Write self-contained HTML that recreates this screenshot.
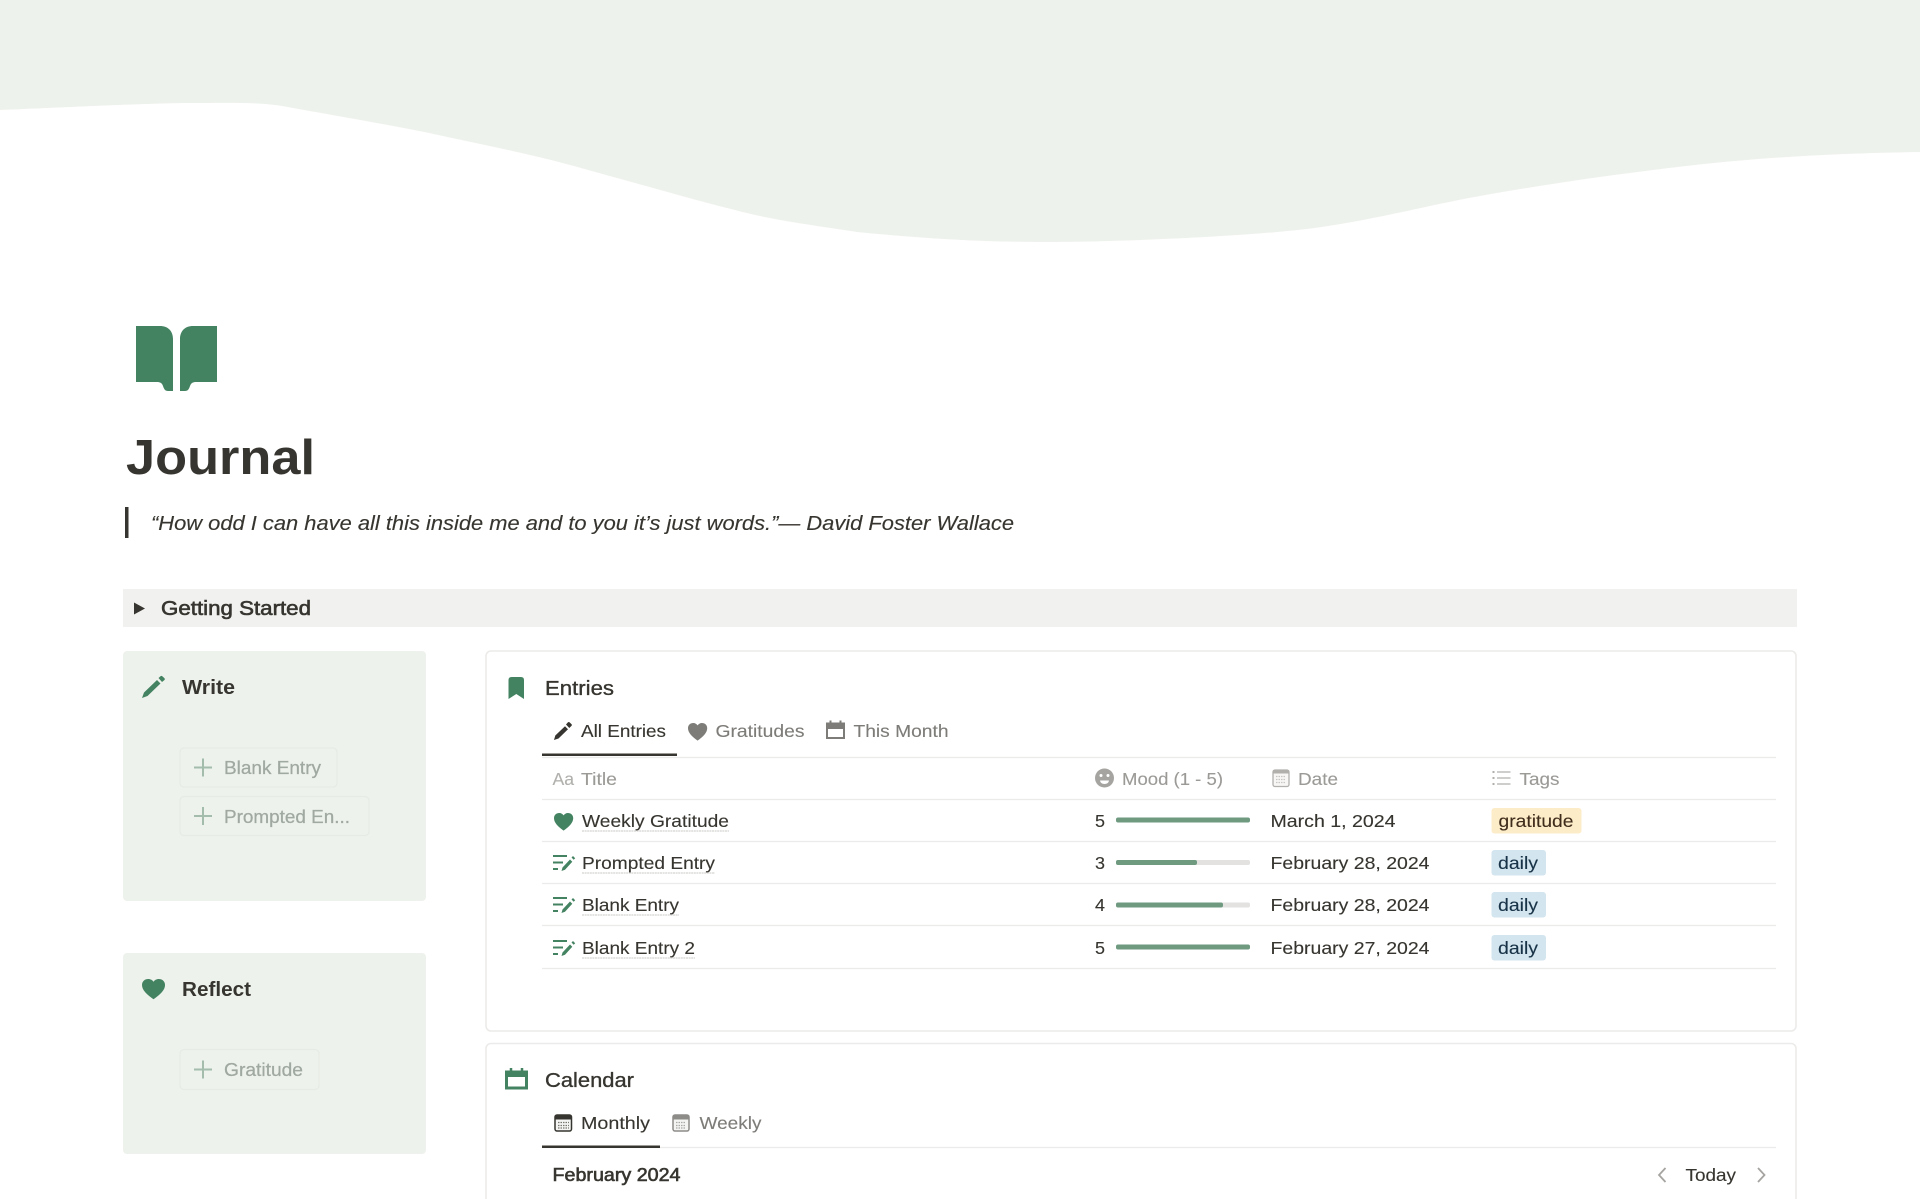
<!DOCTYPE html>
<html lang="en"><head><meta charset="utf-8"><title>Journal</title>
<style>
html,body{margin:0;padding:0;background:#fff;width:1920px;height:1199px;overflow:hidden}
svg{display:block;position:absolute;left:0;top:0}
text{font-family:"Liberation Sans",sans-serif;fill:#37352f;stroke:#37352f;stroke-width:.12px;font-size:17.5px;white-space:pre}
.b{font-weight:700;stroke-width:0}
.s{stroke-width:.6px}
.m{stroke-width:.35px}
.g{fill:#7d7c78;stroke:#7d7c78}
.h{fill:#9b9a97;stroke:#9b9a97}
.btn{fill:#a0a8a2;stroke:#a0a8a2;stroke-width:.25px}
.card{fill:#fff;stroke:#ecebe9;stroke-width:1.6}
.ln{stroke:#ebebe9;stroke-width:1.3}
.u{stroke:#d4d3d0;stroke-width:1.2;stroke-dasharray:2 .6}
.tr{fill:#e3e2e0}.fl{fill:#6f9a80}
</style></head><body>
<svg width="1920" height="1199" viewBox="0 0 1920 1199" xmlns="http://www.w3.org/2000/svg">
<!-- cover -->
<path fill="#eef2ec" d="M0 110C31 109 137 103.700 184 103C215 103.200 258 101.500 282 106C320 113 385 124 429 133C470 142 510 150 551 160C612 176 690 199 735 210C775 221 820 226 857 232C918 238 980 242 1041 242C1127 242 1241 236 1298 230C1355 224 1417 208 1469 198C1550 183 1646 170 1714 163C1783 156 1851 153 1920 152V0H0Z"/>
<!-- book -->
<path fill="#448361" d="M136 326H160C168 326 173 331 173 339V391H168C165 391 164 389 163 386C162 383 160 382 157 382H136Z"/>
<path fill="#448361" d="M217 326H193C185 326 180 331 180 339V391H185C188 391 189 389 190 386C191 383 193 382 196 382H217Z"/>
<!-- title -->
<text x="126" y="474" class="b" style="font-size:49px" textLength="189" lengthAdjust="spacingAndGlyphs">Journal</text>
<rect x="125" y="507" width="3.500" height="31" fill="#37352f"/>
<text x="151" y="530" font-style="italic" style="font-size:20px" textLength="863" lengthAdjust="spacingAndGlyphs">“How odd I can have all this inside me and to you it’s just words.”— David Foster Wallace</text>
<!-- getting started -->
<rect x="123" y="589" width="1674" height="38" fill="#f1f1ef"/>
<path d="M134 602.500L145 608.500L134 614.500Z" fill="#37352f"/>
<text x="161" y="615" class="s" style="font-size:20px" textLength="150" lengthAdjust="spacingAndGlyphs">Getting Started</text>
<!-- write card -->
<rect x="123" y="651" width="303" height="250" rx="4" fill="#eef2ec"/>
<path fill="#448361" d="M142 698L144 692.500L157 680L160.500 683.500L147.500 696ZM158.500 678L160.500 676.200Q161.500 675.500 162.300 676.200L164.500 678.300Q165.300 679.200 164.500 680L162 682Z"/>
<text x="182" y="694" class="b" style="font-size:20px" textLength="53" lengthAdjust="spacingAndGlyphs">Write</text>
<rect x="180" y="748" width="157" height="39" rx="4" fill="none" stroke="#e7ebe5" stroke-width="1.300"/>
<path d="M194 767.500H212M203 758.500V776.500" stroke="#a3bcab" stroke-width="2"/>
<text x="224" y="774" class="btn" style="font-size:18px" textLength="97" lengthAdjust="spacingAndGlyphs">Blank Entry</text>
<rect x="180" y="796.500" width="189" height="39" rx="4" fill="none" stroke="#e7ebe5" stroke-width="1.300"/>
<path d="M194 816H212M203 807V825" stroke="#a3bcab" stroke-width="2"/>
<text x="224" y="823" class="btn" style="font-size:18px" textLength="126" lengthAdjust="spacingAndGlyphs">Prompted En...</text>
<!-- reflect card -->
<rect x="123" y="953" width="303" height="201" rx="4" fill="#eef2ec"/>
<path fill="#448361" transform="translate(142 979) scale(.96 .92)" d="M12 22C5 17 0 12 0 6.500C0 2.500 3 0 6.500 0C9 0 11 1.300 12 3C13 1.300 15 0 17.500 0C21 0 24 2.500 24 6.500C24 12 19 17 12 22Z"/>
<text x="182" y="996" class="b" style="font-size:20px" textLength="69" lengthAdjust="spacingAndGlyphs">Reflect</text>
<rect x="180" y="1049.500" width="139" height="40" rx="4" fill="none" stroke="#e7ebe5" stroke-width="1.300"/>
<path d="M194 1069.500H212M203 1060.500V1078.500" stroke="#a3bcab" stroke-width="2"/>
<text x="224" y="1076" class="btn" style="font-size:18px" textLength="79" lengthAdjust="spacingAndGlyphs">Gratitude</text>
<!-- entries card -->
<rect x="486" y="651" width="1310" height="380" rx="5" class="card"/>
<path fill="#448361" d="M508.500 680Q508.500 677 511.500 677H521Q524 677 524 680V699L516.300 694L508.500 699Z"/>
<text x="545" y="695" class="m" style="font-size:20px" textLength="69" lengthAdjust="spacingAndGlyphs">Entries</text>
<!-- tabs -->
<path fill="#37352f" d="M554 740L555.300 735.500L565 726.300L568 729.300L558.500 738.500ZM566 724.500L568 722.300Q568.800 721.700 569.500 722.300L571.600 724.300Q572.200 725 571.600 725.800L569.300 728Z"/>
<text x="581" y="737" textLength="85" lengthAdjust="spacingAndGlyphs">All Entries</text>
<path fill="#7d7c78" transform="translate(688 723) scale(.8 .8)" d="M12 22C5 17 0 12 0 6.500C0 2.500 3 0 6.500 0C9 0 11 1.300 12 3C13 1.300 15 0 17.500 0C21 0 24 2.500 24 6.500C24 12 19 17 12 22Z"/>
<text x="715.500" y="737" class="g" textLength="89" lengthAdjust="spacingAndGlyphs">Gratitudes</text>
<g fill="none" stroke="#7d7c78"><rect x="827" y="723.500" width="17" height="14.500" stroke-width="2"/><path d="M826 726.500H845" stroke-width="5"/><path d="M830.500 720.500V724M840.500 720.500V724" stroke-width="2"/></g>
<text x="853.500" y="737" class="g" textLength="95" lengthAdjust="spacingAndGlyphs">This Month</text>
<path class="ln" d="M542 757.500H1776"/>
<rect x="542" y="753.500" width="135" height="2.500" fill="#37352f"/>
<!-- header -->
<text x="552.500" y="785" class="h" style="font-size:17.500px;fill:#b1b0ad;stroke:#b1b0ad" textLength="21.500" lengthAdjust="spacingAndGlyphs">Aa</text>
<text x="581" y="785" class="h" textLength="36" lengthAdjust="spacingAndGlyphs">Title</text>
<circle cx="1104.500" cy="778" r="9.500" fill="#a5a4a1"/>
<circle cx="1101" cy="775.500" r="1.500" fill="#fff"/><circle cx="1108" cy="775.500" r="1.500" fill="#fff"/>
<path d="M1100 780.500H1109Q1108.500 784 1104.500 784Q1100.500 784 1100 780.500Z" fill="#fff"/>
<text x="1122" y="785" class="h" textLength="101" lengthAdjust="spacingAndGlyphs">Mood (1 - 5)</text>
<rect x="1273" y="770" width="16" height="16.500" rx="2" fill="#f7f6f4" stroke="#b1b0ad" stroke-width="1.300"/>
<rect x="1273" y="770" width="16" height="3.500" fill="#b1b0ad"/>
<path d="M1276 776.500H1286M1276 779.500H1286M1276 782.500H1286" stroke="#c6c5c2" stroke-width="1.200" stroke-dasharray="1.500 1"/>
<text x="1298" y="785" class="h" textLength="40" lengthAdjust="spacingAndGlyphs">Date</text>
<path d="M1497 772H1510.500M1497 778H1510.500M1497 784H1510.500" stroke="#b1b0ad" stroke-width="1.300"/>
<path d="M1492.500 772H1494.500M1492.500 778H1494.500M1492.500 784H1494.500" stroke="#a5a4a1" stroke-width="1.800"/>
<text x="1519.500" y="785" class="h" textLength="40" lengthAdjust="spacingAndGlyphs">Tags</text>
<path class="ln" d="M542 799.500H1776M542 841.500H1776M542 883.500H1776M542 925.500H1776M542 968.500H1776"/>
<!-- row 1 -->
<path fill="#448361" transform="translate(554 813) scale(.8 .8)" d="M12 22C5 17 0 12 0 6.500C0 2.500 3 0 6.500 0C9 0 11 1.300 12 3C13 1.300 15 0 17.500 0C21 0 24 2.500 24 6.500C24 12 19 17 12 22Z"/>
<text x="582" y="827" textLength="147" lengthAdjust="spacingAndGlyphs">Weekly Gratitude</text>
<path class="u" d="M582 831H729"/>
<text x="1095" y="827" textLength="10" lengthAdjust="spacingAndGlyphs">5</text>
<rect x="1116" y="817.500" width="134" height="5" rx="2" class="fl"/>
<text x="1270.500" y="827" textLength="125" lengthAdjust="spacingAndGlyphs">March 1, 2024</text>
<rect x="1491.500" y="808" width="90" height="25.500" rx="3" fill="#fdecc8"/>
<text x="1498.500" y="827" style="fill:#402c1b;stroke:#402c1b" textLength="75" lengthAdjust="spacingAndGlyphs">gratitude</text>
<!-- row 2 -->
<g id="ei"><path d="M553 856H567M553 862.500H563M553 869H558" stroke="#448361" stroke-width="2"/><path fill="#448361" d="M561.500 871L562.500 867.500L570 859.500L572.300 861.800L565 869.800ZM571.500 857.500L573 856L575.200 858.200L573.700 859.700Z"/></g>
<text x="582" y="869" textLength="133" lengthAdjust="spacingAndGlyphs">Prompted Entry</text>
<path class="u" d="M582 873H715"/>
<text x="1095" y="869" textLength="10" lengthAdjust="spacingAndGlyphs">3</text>
<rect x="1116" y="860" width="134" height="5" rx="2" class="tr"/><rect x="1116" y="860" width="81" height="5" rx="2" class="fl"/>
<text x="1270.500" y="869" textLength="159" lengthAdjust="spacingAndGlyphs">February 28, 2024</text>
<rect x="1491.500" y="850" width="54.500" height="25.500" rx="3" fill="#d3e5ef"/>
<text x="1498" y="869" style="fill:#183347;stroke:#183347" textLength="40" lengthAdjust="spacingAndGlyphs">daily</text>
<!-- row 3 -->
<use href="#ei" y="42"/>
<text x="582" y="911" textLength="97" lengthAdjust="spacingAndGlyphs">Blank Entry</text>
<path class="u" d="M582 915H679"/>
<text x="1095" y="911" textLength="10" lengthAdjust="spacingAndGlyphs">4</text>
<rect x="1116" y="902.500" width="134" height="5" rx="2" class="tr"/><rect x="1116" y="902.500" width="107" height="5" rx="2" class="fl"/>
<text x="1270.500" y="911" textLength="159" lengthAdjust="spacingAndGlyphs">February 28, 2024</text>
<rect x="1491.500" y="892" width="54.500" height="25.500" rx="3" fill="#d3e5ef"/>
<text x="1498" y="911" style="fill:#183347;stroke:#183347" textLength="40" lengthAdjust="spacingAndGlyphs">daily</text>
<!-- row 4 -->
<use href="#ei" y="85"/>
<text x="582" y="954" textLength="113" lengthAdjust="spacingAndGlyphs">Blank Entry 2</text>
<path class="u" d="M582 958H695"/>
<text x="1095" y="954" textLength="10" lengthAdjust="spacingAndGlyphs">5</text>
<rect x="1116" y="944.500" width="134" height="5" rx="2" class="fl"/>
<text x="1270.500" y="954" textLength="159" lengthAdjust="spacingAndGlyphs">February 27, 2024</text>
<rect x="1491.500" y="935" width="54.500" height="25.500" rx="3" fill="#d3e5ef"/>
<text x="1498" y="954" style="fill:#183347;stroke:#183347" textLength="40" lengthAdjust="spacingAndGlyphs">daily</text>
<!-- calendar card -->
<rect x="486" y="1043.500" width="1310" height="170" rx="5" class="card"/>
<g fill="none" stroke="#448361"><rect x="506.500" y="1072" width="20" height="16" stroke-width="3"/><path d="M505 1074H528" stroke-width="6"/><path d="M511 1068V1072M522 1068V1072" stroke-width="2.500"/></g>
<text x="545" y="1087" class="m" style="font-size:20px" textLength="89" lengthAdjust="spacingAndGlyphs">Calendar</text>
<rect x="555" y="1115" width="16.500" height="16" rx="2" fill="#f4f4f2" stroke="#37352f" stroke-width="1.500"/>
<rect x="555" y="1115" width="16.500" height="4.500" fill="#37352f"/>
<path d="M558 1122.500H569M558 1125.500H569M558 1128H569" stroke="#77766f" stroke-width="1.200" stroke-dasharray="1.500 1"/>
<text x="581" y="1129" textLength="69" lengthAdjust="spacingAndGlyphs">Monthly</text>
<rect x="673" y="1115" width="16" height="16" rx="2" fill="#f4f4f2" stroke="#8d8c88" stroke-width="1.500"/>
<rect x="673" y="1115" width="16" height="4.500" fill="#8d8c88"/>
<path d="M676 1122.500H686M676 1125.500H686M676 1128H686" stroke="#a9a8a5" stroke-width="1.200" stroke-dasharray="1.500 1"/>
<text x="699.500" y="1129" class="g" textLength="62" lengthAdjust="spacingAndGlyphs">Weekly</text>
<path class="ln" d="M542 1147.500H1776"/>
<rect x="542" y="1145.500" width="118" height="2.500" fill="#37352f"/>
<text x="552.500" y="1181" class="s" style="font-size:18px" textLength="128" lengthAdjust="spacingAndGlyphs">February 2024</text>
<path d="M1665.500 1168L1659 1175L1665.500 1182" fill="none" stroke="#a5a4a1" stroke-width="1.800"/>
<text x="1685.500" y="1181" textLength="50.500" lengthAdjust="spacingAndGlyphs">Today</text>
<path d="M1758 1168L1764.500 1175L1758 1182" fill="none" stroke="#a5a4a1" stroke-width="1.800"/>
</svg>
</body></html>
